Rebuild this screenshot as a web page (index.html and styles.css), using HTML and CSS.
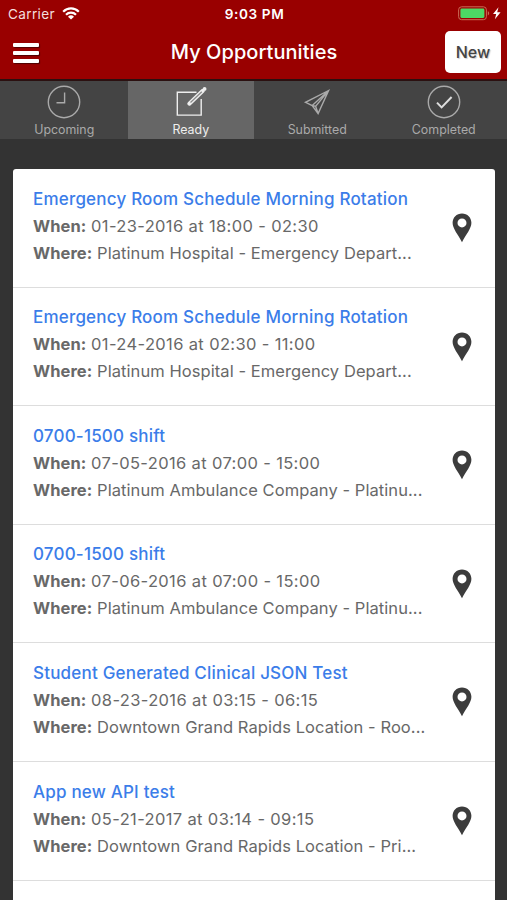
FILE: index.html
```
<!DOCTYPE html>
<html lang="en">
<head>
  <meta charset="UTF-8" />
  <meta name="viewport" content="width=device-width, initial-scale=1.0"/>
  <title>My Opportunities</title>
  <link rel="stylesheet" href="styles.css">
</head>
<body>
  <!-- Shared map pin -->
  <svg class="hidden">
    <symbol id="pin" viewBox="0 0 20 30">
      <path fill-rule="evenodd" d="M10 .5C4.600.5.600 4.600.600 9.800c0 5.700 5.200 11.500 9.400 19.400 4.200-7.900 9.400-13.700 9.400-19.400C19.400 4.600 15.400.5 10 .5zM10 5.400a4.500 4.500 0 1 1 0 9 4.500 4.500 0 0 1 0-9z"/>
    </symbol>
  </svg>

  <header class="header">
    <div class="status-bar">
      <div class="carrier">
        <span>Carrier</span>
        <svg width="18" height="13" viewBox="0 0 18 13" fill="none" stroke="#fff" stroke-width="2.200">
          <path d="M1.200 4.700a11 11 0 0 1 15.600 0M4 7.800a7 7 0 0 1 10 0"/>
          <path fill="#fff" stroke="none" d="M9 12.600 6 9.700a4.300 4.300 0 0 1 6 0z"/>
        </svg>
      </div>
      <div class="time">9:03 PM</div>
      <div class="battery">
        <svg width="43" height="15" viewBox="0 0 43 15">
          <rect x=".6" y=".8" width="27.800" height="12.900" rx="3" fill="none" stroke="#c96a55"/>
          <rect x="2.400" y="2.600" width="24" height="9.300" rx="1.300" fill="#4cd964"/>
          <path d="M29.800 5.200c1.800.5 1.800 3.600 0 4.200z" fill="#c96a55"/>
          <path d="M40.500 1.300 35 8h3.200l-1.300 5.300L42.600 6.300h-3.400z" fill="#fff"/>
        </svg>
      </div>
    </div>
    <div class="nav-bar">
      <button class="menu" aria-label="Menu"><span></span><span></span><span></span></button>
      <h1>My Opportunities</h1>
      <button class="btn-new">New</button>
    </div>
  </header>

  <nav class="tabs">
    <a class="tab">
      <svg width="34" height="34" viewBox="0 0 34 34"><circle cx="17" cy="17" r="15.700"/><path d="M17.600 7.500v10.200H9.500"/></svg>
      <span>Upcoming</span>
    </a>
    <a class="tab active">
      <svg width="34" height="34" viewBox="0 0 34 34">
        <path d="M22.500 7.300H3.300v22.800h23.900V14"/>
        <path class="pencil" d="M15.300 18.700 28.800 5.800"/>
        <path class="pencil-core" d="M16.500 17.500 27.800 6.700"/>
        <circle class="dot" cx="30.600" cy="3.900" r="1.900"/>
      </svg>
      <span>Ready</span>
    </a>
    <a class="tab">
      <svg width="34" height="34" viewBox="0 0 34 34"><path d="M28.600 5.500 5.500 17.300l6.700 3.300 5.900 8zM12.200 20.600 28.600 5.500l-13 15.800 2.500 7.300M12.200 20.600l3.400.7"/></svg>
      <span>Submitted</span>
    </a>
    <a class="tab">
      <svg width="34" height="34" viewBox="0 0 34 34"><circle cx="17" cy="17" r="15.700"/><path class="check" d="m10 17.600 4.600 4.800 10-10.400"/></svg>
      <span>Completed</span>
    </a>
  </nav>

  <main class="list">
    <article class="item">
      <div class="info">
        <h2>Emergency Room Schedule Morning Rotation</h2>
        <p><strong>When:</strong> <span class="date">01-23-2016 at 18:00 - 02:30</span></p>
        <p><strong>Where:</strong> Platinum Hospital - Emergency Depart...</p>
      </div>
      <svg class="pin"><use href="#pin"/></svg>
    </article>
    <article class="item">
      <div class="info">
        <h2>Emergency Room Schedule Morning Rotation</h2>
        <p><strong>When:</strong> <span class="date">01-24-2016 at 02:30 - 11:00</span></p>
        <p><strong>Where:</strong> Platinum Hospital - Emergency Depart...</p>
      </div>
      <svg class="pin"><use href="#pin"/></svg>
    </article>
    <article class="item">
      <div class="info">
        <h2>0700-1500 shift</h2>
        <p><strong>When:</strong> <span class="date">07-05-2016 at 07:00 - 15:00</span></p>
        <p><strong>Where:</strong> Platinum Ambulance Company - Platinu...</p>
      </div>
      <svg class="pin"><use href="#pin"/></svg>
    </article>
    <article class="item">
      <div class="info">
        <h2>0700-1500 shift</h2>
        <p><strong>When:</strong> <span class="date">07-06-2016 at 07:00 - 15:00</span></p>
        <p><strong>Where:</strong> Platinum Ambulance Company - Platinu...</p>
      </div>
      <svg class="pin"><use href="#pin"/></svg>
    </article>
    <article class="item">
      <div class="info">
        <h2>Student Generated Clinical JSON Test</h2>
        <p><strong>When:</strong> <span class="date">08-23-2016 at 03:15 - 06:15</span></p>
        <p><strong>Where:</strong> Downtown Grand Rapids Location - Roo...</p>
      </div>
      <svg class="pin"><use href="#pin"/></svg>
    </article>
    <article class="item">
      <div class="info">
        <h2>App new API test</h2>
        <p><strong>When:</strong> <span class="date">05-21-2017 at 03:14 - 09:15</span></p>
        <p><strong>Where:</strong> Downtown Grand Rapids Location - Pri...</p>
      </div>
      <svg class="pin"><use href="#pin"/></svg>
    </article>
  </main>
</body>
</html>
```
FILE: styles.css
```
* {
  box-sizing: border-box;
}

body {
  margin: 0;
  height: 100vh;
  overflow: hidden;
  display: flex;
  flex-direction: column;
  background-color: #333;
  color: #686868;
  font-family: Inter, "Liberation Sans", sans-serif;
}

h1, h2, p {
  margin: 0;
}

.hidden { display: none; }

/* Header */
.header {
  height: 81px;
  flex: none;
  background-color: #990000;
  border-bottom: 2px solid #2b1010;
  color: white;
}

.status-bar {
  display: grid;
  grid-template-columns: 1fr auto 1fr;
  align-items: center;
  height: 27px;
  padding: 0 6px 0 8px;
  font-size: 13.6px;
}

.carrier {
  display: flex;
  align-items: center;
  gap: 7px;
  color: #f3dede;
  letter-spacing: 0.35px;
}

.time {
  font-weight: 600;
  letter-spacing: 0.6px;
}

.battery {
  display: flex;
  justify-content: flex-end;
}

.nav-bar {
  display: grid;
  grid-template-columns: 1fr auto 1fr;
  align-items: center;
  height: 50px;
  padding: 0 6px 0 13px;
}

.nav-bar h1 {
  margin: 0 6px 0 0;
  font-size: 20px;
  font-weight: 500;
  letter-spacing: 0.05px;
}

.menu {
  display: flex;
  flex-direction: column;
  gap: 4px;
  width: 26px;
  padding: 2px 0 0;
  border: none;
  background: none;
}

.menu span {
  height: 4px;
  border-radius: 1px;
  background-color: white;
  box-shadow: 1px 1px 1px rgba(0,0,0,0.5);
}

.btn-new {
  justify-self: end;
  width: 56px;
  height: 42px;
  padding: 0;
  border: none;
  border-radius: 5px;
  background-color: white;
  color: #444;
  font-family: inherit;
  font-size: 16px;
  font-weight: 500;
  text-shadow: 1px 1px 1px rgba(0,0,0,0.2);
}

/* Tabs */
.tabs {
  display: grid;
  grid-template-columns: repeat(4, 1fr);
  height: 58px;
  flex: none;
  padding-left: 1px;
  background-color: #444;
}

.tab {
  display: flex;
  flex-direction: column;
  align-items: center;
  height: 58px;
  padding-top: 4px;
  color: #aaa;
  font-size: 12.4px;
  line-height: 22px;
}

.tab.active {
  background-color: #666;
  color: #eee;
}

.tab svg {
  flex: none;
  fill: none;
  stroke: currentColor;
  stroke-width: 1.4;
}

.tab .check {
  stroke: #ddd;
  stroke-width: 2;
}

.tab .pencil {
  stroke-width: 4;
  stroke-linecap: round;
}

.tab .pencil-core {
  stroke: #888;
  stroke-width: 1.2;
}

.tab .dot {
  fill: currentColor;
  stroke: none;
}

/* Opportunity list */
.list {
  flex: 1;
  margin: 30px 12px 0 13px;
  border-radius: 3px 3px 0 0;
  background-color: white;
}

.item {
  display: flex;
  justify-content: space-between;
  height: 118.6px;
  padding: 16.6px 23.5px 0 20px;
  border-bottom: 1px solid #ddd;
}

.info {
  line-height: 27px;
  font-size: 16.5px;
  letter-spacing: 0.07px;
  white-space: nowrap;
}

.info h2 {
  color: #3b7de9;
  font-size: 17px;
  font-weight: 500;
  letter-spacing: 0.2px;
}

.info .date {
  letter-spacing: 0.36px;
}

.pin {
  width: 20px;
  height: 30px;
  margin-top: 27.4px;
  fill: #3c3c3c;
}
```
